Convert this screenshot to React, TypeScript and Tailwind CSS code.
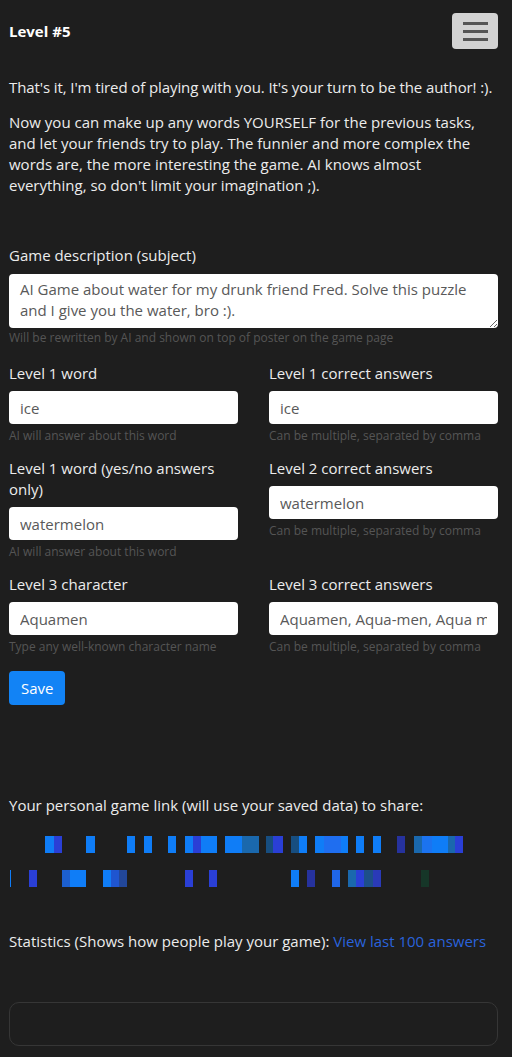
const font = { fontFamily: '"Open Sans", "Noto Sans", sans-serif' };

type Field = { label: string; value: string; hint: string };

const rows: [Field, Field][] = [
    [
        { label: "Level 1 word", value: "ice", hint: "AI will answer about this word" },
        { label: "Level 1 correct answers", value: "ice", hint: "Can be multiple, separated by comma" },
    ],
    [
        { label: "Level 1 word (yes/no answers only)", value: "watermelon", hint: "AI will answer about this word" },
        { label: "Level 2 correct answers", value: "watermelon", hint: "Can be multiple, separated by comma" },
    ],
    [
        { label: "Level 3 character", value: "Aquamen", hint: "Type any well-known character name" },
        { label: "Level 3 correct answers", value: "Aquamen, Aqua-men, Aqua man", hint: "Can be multiple, separated by comma" },
    ],
];

// pixelated share link: [x, width, colour]
const B = "#0f7df7", I = "#2a3fd6", T = "#1a68ad", D = "#174e80";
const linkRow1: [number, number, string][] = [
    [45, 9, B], [54, 8, I], [86, 9, B], [127, 8, B], [144, 8, B], [168, 8, B],
    [185, 8, B], [193, 8, I], [201, 16, B], [225, 17, B], [242, 17, T], [266, 7, D], [273, 10, I],
    [291, 8, D], [299, 8, B], [315, 9, B], [324, 17, "#1f6ef0"], [341, 7, B], [356, 8, B], [373, 8, B],
    [397, 8, "#26329e"], [414, 8, T], [422, 10, "#1b73f0"], [432, 16, B], [448, 7, T], [455, 8, I],
];
const linkRow2: [number, number, string][] = [
    [10, 1, B], [29, 8, I], [62, 8, "#1c5fcf"], [70, 16, B], [103, 8, B], [111, 8, "#1f55d0"], [119, 8, "#22479a"],
    [185, 8, I], [209, 8, I], [291, 8, B], [307, 8, "#26329e"], [332, 8, "#1f66e8"], [348, 8, T],
    [356, 8, I], [364, 9, "#1d4f8a"], [373, 8, "#2a3ab8"], [421, 8, "#163628"],
];

function Mosaic({ cells }: { cells: [number, number, string][] }) {
    return (
        <svg width="489" height="17" viewBox="0 0 489 17" className="block">
            {cells.map(([x, w, c], i) => (
                <rect key={i} x={x - 9} y={0} width={w} height={17} fill={c} />
            ))}
        </svg>
    );
}

function FormField({ f }: { f: Field }) {
    return (
        <div className="flex flex-col">
            <label className="text-[15px] leading-[21px] text-[#ececec] mb-[7px]">{f.label}</label>
            <input
                defaultValue={f.value}
                className="h-[33px] w-full rounded-[4px] bg-white px-[11px] text-[15px] text-[#595959] outline-none"
                style={font}
            />
            <span className="mt-[4px] text-[12px] leading-[15px] text-[#555]">{f.hint}</span>
        </div>
    );
}

export default function App() {
    return (
        <div className="min-h-[1057px] w-full bg-[#1e1e1e] text-[#ececec]" style={font}>
            <div className="pl-[9px] pr-[14px]">
                {/* Header */}
                <div className="flex items-center justify-between pt-[13px]">
                    <h1 className="text-[15px] font-bold text-white">Level #5</h1>
                    <button className="flex h-[36px] w-[46px] flex-col items-center justify-center gap-[5px] rounded-[4px] bg-[#d2d2d2]">
                        <span className="block h-[3px] w-[25px] bg-[#555]" />
                        <span className="block h-[3px] w-[25px] bg-[#555]" />
                        <span className="block h-[3px] w-[25px] bg-[#555]" />
                    </button>
                </div>

                {/* Intro */}
                <p className="mt-[28px] whitespace-nowrap text-[15px] leading-[21px] tracking-[-0.1px]">
                    That's it, I'm tired of playing with you. It's your turn to be the author! :).
                </p>
                <p className="mt-[14px] text-[15px] leading-[21px]">
                    Now you can make up any words YOURSELF for the previous tasks, and let your friends try to play. The funnier and more complex the words are, the more interesting the game. AI knows almost everything, so don't limit your imagination ;).
                </p>

                {/* Description */}
                <div className="mt-[49px] flex flex-col">
                    <label className="text-[15px] leading-[21px] mb-[8px]">Game description (subject)</label>
                    <textarea
                        defaultValue="AI Game about water for my drunk friend Fred. Solve this puzzle and I give you the water, bro :)."
                        className="h-[54px] w-full resize-y rounded-[4px] bg-white px-[11px] py-[5px] text-[15px] leading-[21px] text-[#595959] outline-none"
                        style={font}
                    />
                    <span className="mt-[2px] text-[12px] leading-[15px] text-[#555]">
                        Will be rewritten by AI and shown on top of poster on the game page
                    </span>
                </div>

                {/* Levels */}
                <div className="mt-[18px] flex flex-col gap-[15px]">
                    {rows.map(([a, b], i) => (
                        <div key={i} className="grid grid-cols-2 gap-x-[31px] items-start">
                            <FormField f={a} />
                            <FormField f={b} />
                        </div>
                    ))}
                </div>

                <button className="mt-[17px] h-[34px] rounded-[4px] bg-[#1283f5] px-[12px] text-[15px] text-white">
                    Save
                </button>

                {/* Share */}
                <p className="mt-[90px] text-[15px] leading-[21px]">
                    Your personal game link (will use your saved data) to share:
                </p>
                <div className="mt-[20px] flex flex-col gap-[17px]">
                    <Mosaic cells={linkRow1} />
                    <Mosaic cells={linkRow2} />
                </div>

                <p className="mt-[44px] text-[15px] leading-[21px]">
                    Statistics (Shows how people play your game):{" "}
                    <a href="#" className="text-[#2a63dc]">View last 100 answers</a>
                </p>

                <div className="mt-[50px] h-[44px] w-full rounded-[10px] border border-[#363636]" />
            </div>
        </div>
    );
}
